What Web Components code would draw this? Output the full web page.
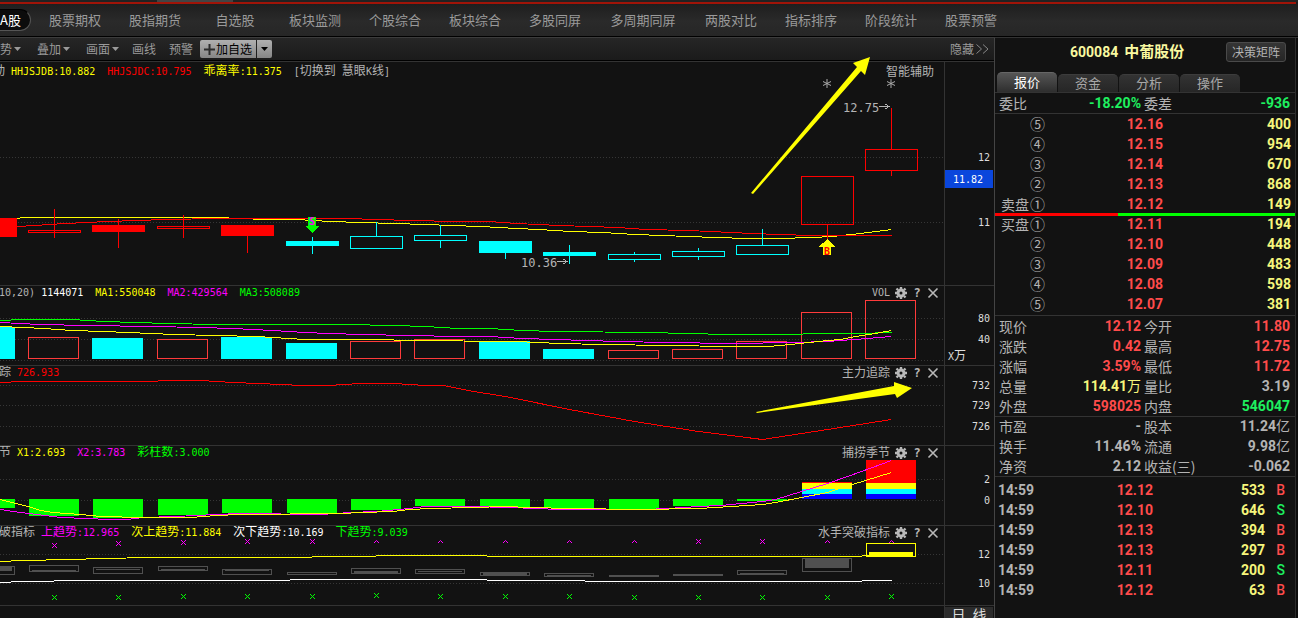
<!DOCTYPE html>
<html lang="zh-CN">
<head>
<meta charset="utf-8">
<title>600084 中葡股份</title>
<style>
html, body { margin: 0; height: 100%; background: #121212; overflow: hidden; }
body {
  --line: #333333;
  --grey: #b4b4b4;
  --red: #ff4b4b;
  --green: #1eef5f;
  --yellow: #f6f67c;
  --mono: "DejaVu Sans Mono", "Noto Sans CJK SC", monospace;
  --cjk: "Noto Sans CJK SC", sans-serif;
  --num: Roboto, "Noto Sans CJK SC", sans-serif;
  font: 12px/14px var(--cjk);
  color: var(--grey);
}
</style>
</head>
<body>
<market-app></market-app>

<script>
const reset = `
  *, *::before { box-sizing: border-box; }
  button, a { font: inherit; color: inherit; background: none; border: 0; padding: 0; margin: 0; text-decoration: none; white-space: nowrap; cursor: pointer; }
  svg { display: block; flex: none; }
  table { border-collapse: collapse; width: 100%; table-layout: fixed; }
  td, th { padding: 0; font-weight: 400; text-align: left; white-space: nowrap; }
`;

class Base extends HTMLElement {
  connectedCallback() {
    if (this.shadowRoot) return;
    const t = document.createElement('template');
    t.innerHTML = `<style>${reset}${this.css()}</style>${this.html()}`;
    this.attachShadow({ mode: 'open' }).append(t.content.cloneNode(true));
  }
  css() { return ''; }
  html() { return '<slot></slot>'; }
}

/* Main navigation */
customElements.define('top-nav', class extends Base {
  css() { return `
    :host { display: block; background: linear-gradient(#1c1c1c, #2a2a2a 60%, #262626); border-bottom: 1px solid #000; }
    .strip { height: 2px; background: #222; padding-left: 157px; }
    .strip i { display: block; width: 76px; height: 2px; background: #444; }
    .red { height: 2px; background: #a01408; margin-right: 2px; }
    nav { display: flex; align-items: center; height: 32px; gap: 4px; font-size: 13px; line-height: 20px; color: #9a9a9a; }
    .on { height: 22px; width: 31px; background: #0c0c0c; color: #fff; border: 1px solid #555; border-left: 0; border-top-color: #000; border-radius: 0 12px 12px 0; overflow: hidden; display: flex; justify-content: flex-end; padding-right: 9px; }
    ul { display: flex; list-style: none; margin: 0; padding: 0; }
    li { width: 80px; text-align: center; }
    li.wide { width: 96px; }
  `; }
  html() {
    const items = ['股票期权','股指期货','自选股','板块监测','个股综合','板块综合','多股同屏','多周期同屏','两股对比','指标排序','阶段统计','股票预警'];
    return `<div class="strip"><i></i></div><div class="red"></div>
      <nav><a class="on" href="#a">A股</a><ul>${items.map(t => `<li${t.length > 4 ? ' class="wide"' : ''}><a href="#">${t}</a></li>`).join('')}</ul></nav>`;
  }
});

/* Chart toolbar */
customElements.define('tool-bar', class extends Base {
  css() { return `
    :host { display: flex; align-items: center; height: 24px; gap: 7px; border-top: 1px solid #3c3c3c; border-bottom: 1px solid #000; background: linear-gradient(#262626, #1b1b1b); color: #9a9a9a; padding-right: 5px; line-height: 18px; }
    .tools { display: flex; gap: 13px; }
    .drop { display: flex; align-items: center; gap: 2px; margin-right: 3px; }
    .drop:nth-child(3) { margin-right: 0; }
    .split { display: flex; gap: 1px; color: #000; }
    .split button { height: 18px; background: linear-gradient(#b0b0b0, #858585); display: flex; align-items: center; }
    .add { padding: 0 4px; gap: 1px; border-radius: 2px 0 0 2px; }
    .more { padding: 0 4px; border-radius: 0 2px 2px 0; }
    .hide { margin-left: auto; display: flex; align-items: center; gap: 2px; }
  `; }
  html() {
    const caret = '<svg width="7" height="4"><path d="M0 0h7L3.5 4z" fill="currentColor"/></svg>';
    return `<div class="tools">
      ${['势','叠加','画面'].map(t => `<button class="drop">${t}${caret}</button>`).join('')}
      <button>画线</button><button>预警</button></div>
      <div class="split"><button class="add"><svg width="11" height="11"><path d="M5.500 0v11M0 5.500h11" stroke="#2c2c2c" stroke-width="2"/></svg>加自选</button><button class="more" aria-label="更多">${caret}</button></div>
      <button class="hide">隐藏<svg width="13" height="10" fill="none" stroke="#888"><path d="M.5 .5L5.500 5 .5 9.500M7 .5L12 5 7 9.500"/></svg></button>`;
  }
});

/* ---- drawing helpers: x and y are on one canvas shared by all panes ---- */
const box = (x, y, x2, y2, c, full) => full
  ? `<rect x="${x}" y="${y}" width="${x2 - x}" height="${y2 - y}" fill="${c}"/>`
  : `<rect x="${x + .5}" y="${y + .5}" width="${x2 - x - 1}" height="${y2 - y - 1}" fill="none" stroke="${c}"/>`;
const vline = (x, y, y2, c) => box(x, y, x + 1, y2, c, true);
const poly = (pts, c) => `<polyline fill="none" stroke="${c}" points="${pts.split(' ').map(p => p.split(',').map(n => +n + .5).join(',')).join(' ')}"/>`;
const dots = ys => ys.map(y => `<line x1="0" x2="100%" y1="${y + .5}" y2="${y + .5}" stroke="#363636" stroke-dasharray="1 2"/>`).join('');
const label = (x, y, t, o = '') => `<text x="${x}" y="${y}" ${o}>${t}</text>`;
const R = '#ff0000', C = '#00ffff', Y = '#ffff00', M = '#ff00ff', G = '#00ff00', V = '#ff3b3b';
const mids = [54,118,183,247,312,376,440,505,569,634,698,762,827,891];

const price = () => {
  const candles = [
    [-1,218,17,237,R,1],[28,230,81,233,R,0,54,209,238],[92,225,145,232,R,1,118,219,248],[157,226,210,229,R,0,183,215,238],
    [221,225,274,236,R,1,247,236,253],[286,241,339,246,C,1,312,237,254],[350,236,403,249,C,0,376,222,236],
    [414,235,467,241,C,0,440,225,235,241,248],[479,241,532,253,C,1,505,253,259],[543,252,596,256,C,1,569,245,264],
    [608,254,661,260,C,0,634,252,254,260,262],[672,251,725,257,C,0,698,248,251,257,260],[736,245,789,255,C,0,762,229,245],
    [801,176,854,225,R,0,827,225,239],[865,149,918,171,R,0,891,108,149,171,176]];
  return dots([157, 222])
    + poly('17,218 22,217 216,217 264,219 296,219 330,221 361,222 393,223 425,224 451,225 480,226 516,228 538,229 570,231 602,232 635,234 688,236 715,237 747,238 779,238 811,237 832,236 860,233 891,229', Y)
    + poly('17,226 35,225 48,224 65,223 86,222 108,221 135,220 167,219 216,218 345,218 409,220 457,221 489,221 516,223 559,225 618,227 645,229 688,230 731,232 752,233 779,234 811,235 891,235', R)
    + candles.map(c => (c[6] ? vline(c[6], c[7], c[8], c[4]) : '') + (c[9] ? vline(c[6], c[9], c[10], c[4]) : '') + box(c[0], c[1], c[2], c[3], c[4], c[5])).join('')
    + box(308, 217, 316, 226, G, true) + '<path d="M305 226h14l-7 7z" fill="#0f0"/>' + label(312, 225, 'S', 'font-size="10" text-anchor="middle" font-weight="700" fill="#f0f"')
    + '<path d="M827.500 239l8 7.500h-4.500V255h-8v-8.500h-4z" fill="#ff0"/>' + label(827, 255, 'B', 'font-size="10" text-anchor="middle" font-weight="700" fill="#f00"')
    + label(843, 112, '12.75', 'font-size="12"') + label(521, 267, '10.36', 'font-size="12"')
    + '<path d="M879 106.500h10M885.500 104l3.500 2.500-3.500 2.500M557 261.500h10M563.500 259l3.500 2.500-3.500 2.500" fill="none" stroke="#b4b4b4"/>'
    + [827, 891].map(x => `<path d="M${x} 79v9M${x - 4} 81.500l8 4M${x + 4} 81.500l-8 4" stroke="#aaa" shape-rendering="auto"/>`).join('');
};

const volume = () => {
  const bars = [[0,327,15,1],[28,337,79],[92,338,143,1],[157,339,208],[221,337,272,1],[286,343,337,1],[350,341,401],[414,339,465],[479,341,530,1],[543,349,594,1],[608,350,659],[672,349,723],[736,341,787],[801,312,852],[865,300,916]];
  return dots([318, 339, 360]) + bars.map(b => box(b[0], b[1], b[2], 359, b[3] ? C : V, b[3])).join('')
    + poly('0,320 22,319 71,319 103,321 135,322 167,323 216,324 345,324 393,325 425,326 457,328 489,328 522,330 554,331 651,332 683,333 731,334 795,334 811,333 859,333 891,332', G)
    + poly('0,322 39,324 87,325 151,326 200,327 232,328 272,330 304,332 329,333 361,334 409,335 457,336 489,336 522,338 586,340 618,341 667,342 731,343 795,342 827,341 867,338 891,336', M)
    + poly('0,326 23,327 44,328 71,330 103,331 151,333 173,334 216,335 256,336 304,339 377,339 409,340 515,341 559,343 602,344 667,345 730,346 768,346 790,344 827,340 840,339 855,336 875,333 891,330', Y);
};

const track = () => dots([385, 405, 426])
  + poly('0,382 22,381 151,381 165,380 200,380 232,382 258,383 280,384 302,385 328,385 360,383 393,383 425,385 443,385 473,391 505,396 569,409 634,421 698,431 762,439 827,429 891,419', R);

const season = () => dots([479, 500])
  + [[0,508,15],[29,516,79],[93,518,143],[158,515,208],[222,513,272],[287,513,337],[351,510,401],[415,506,465],[480,507,530],[544,508,594],[609,509,659],[673,506,723],[737,501,787]].map(b => box(b[0], 499, b[2], b[1], G, true)).join('')
  + [[802, 482], [866, 460]].map(([x, y]) => box(x, y, x + 50, 483, R, true) + box(x, 483, x + 50, 489, Y, true) + box(x, 489, x + 50, 494, C, true) + box(x, 494, x + 50, 499, '#00f', true)).join('')
  + poly('0,509 12,511 28,513 45,515 60,517 87,518 108,519 127,519 143,517 175,516 216,514 240,513 320,514 350,512 376,511 409,508 425,506 473,506 505,507 540,508 554,509 645,509 667,508 698,506 720,505 762,501 775,499 827,483 850,475 891,460', M)
  + poly('0,499 15,503 28,506 40,510 53,512 80,514 100,516 143,517 190,517 216,515 240,514 340,513 361,512 393,511 409,509 430,508 473,507 505,506 530,507 570,508 640,509 698,508 731,506 762,504 775,502 827,492 852,484 891,472', Y);

const breakout = () => {
  const D = '#505050';
  const cells = [[-1,566,15,575,0,566,12,571],[29,565,79,572,32,570,76,572],[93,567,143,574,96,569,140,570],[158,566,208,571,161,569,205,570],[222,569,272,575,225,570,269,571],[287,572,337,575],[351,568,401,574,354,571,398,574],[415,569,465,574,418,571,462,572],[480,572,530,576,483,572,527,576],[544,573,594,577,547,575,591,577],[609,575,659,577],[673,574,723,576],[737,570,787,575,740,573,784,574],[802,558,852,572,805,558,849,568]];
  const ys = [545,543,542,541,541,541,541,541,541,541,541,541,541,541];
  const hat = [5,6,7,8,9,12,13];
  const gy = [597,597,596,596,596,595,596,596,596,597,597,597,597,596];
  const x = (cx, cy, c) => `<path d="M${cx - 2} ${cy - 2}l5 5M${cx + 3} ${cy - 2}l-5 5" stroke="${c}" shape-rendering="auto"/>`;
  return dots([554, 583])
    + poly('0,561 22,560 70,559 102,558 151,557 280,557 408,555 473,555 500,556 858,556 866,555 875,555', Y)
    + poly('0,582 22,581 86,580 280,580 300,579 473,579 500,580 667,581 858,581 866,580 891,580', '#fff')
    + cells.map(c => box(c[0], c[1], c[2], c[3], D) + (c[6] ? box(c[4], c[5], c[6], c[7], D, true) : '')).join('')
    + box(866, 543, 916, 557, Y) + box(869, 552, 913, 556, Y, true)
    + mids.map((m, i) => (hat.includes(i) ? `<path d="M${m - 2} 543l2.500-2.500 2.500 2.500" fill="none" stroke="${M}" shape-rendering="auto"/>` : x(m, ys[i], M)) + x(m, gy[i], G)).join('');
};

/* One chart with its legend, its buttons and its scale. */
const plots = { price, volume, track, season, breakout };
customElements.define('chart-pane', class extends Base {
  css() { return `
    :host { display: grid; grid-template-columns: minmax(0, 1fr) 50px; border-bottom: 1px solid var(--line); font: 10px/14px var(--mono); }
    .plot { display: grid; grid-template-columns: minmax(0, 1fr); overflow: hidden; }
    .plot > * { grid-area: 1 / 1; }
    header { display: flex; align-items: center; justify-content: space-between; align-self: start; height: ${this.getAttribute('kind') === 'price' ? 20 : 14}px; padding-right: 5px; white-space: pre; }
    .legend { display: flex; gap: 12px; margin-left: -1px; }
    .side { display: flex; align-items: center; gap: 4px; }
    .side button { width: 12px; height: 12px; font: 700 12px/12px var(--mono); display: grid; place-items: center; color: #b8b8b8; }
    svg { width: 100%; shape-rendering: crispEdges; fill: var(--grey); }
    .side svg { width: 12px; }
    .axis { border-left: 1px solid var(--line); }
    .axis text { fill: #ddd; }
  `; }
  html() {
    const top = +this.getAttribute('top'), h = +this.getAttribute('rows');
    const kind = this.getAttribute('kind');
    const marks = JSON.parse(this.getAttribute('scale')).map(([t, y]) => label(45, y + 4, t, 'text-anchor="end"')).join('');
    const extra = kind === 'price' ? '<rect y="170" width="48" height="18" fill="#0a46dc"/>' + label(8, 183, '11.82', 'style="fill:#fff"')
      : kind === 'volume' ? '<text x="3" y="360">X<tspan font-size="12">万</tspan></text>' : '';
    const tools = kind === 'price' ? '' : `
      <button aria-label="设置"><svg width="12" height="12" viewBox="0 0 12 12"><g fill="none" stroke="#b8b8b8" shape-rendering="auto"><circle cx="6" cy="6" r="3" stroke-width="3"/><path stroke-width="2.400" d="M6 0v2M6 10v2M0 6h2M10 6h2M1.500 1.500l1.500 1.500M9 9l1.500 1.500M10.500 1.500L9 3M3 9l-1.500 1.500"/></g></svg></button>
      <button>?</button>
      <button aria-label="关闭"><svg width="12" height="12"><path d="M1.500 1.500l9 9M10.500 1.500l-9 9" stroke="#b8b8b8" stroke-width="1.600" shape-rendering="auto"/></svg></button>`;
    return `<div class="plot"><svg height="${h}"><g transform="translate(0 ${-top})">${plots[kind]()}</g></svg>
      <header><div class="legend"><slot></slot></div><div class="side"><slot name="title"></slot>${tools}</div></header></div>
      <div class="axis"><svg height="${h}"><g transform="translate(0 ${-top})">${extra}${marks}</g></svg></div>`;
  }
});

/* Legend entry: Chinese text is set larger than the figures beside it. */
customElements.define('legend-item', class extends Base {
  css() { return `:host { display: block; white-space: pre; color: ${this.getAttribute('ink') || 'inherit'}; } ::slotted(b) { font-weight: 400; }`; }
});

customElements.define('quote-head', class extends Base {
  css() { return `
    :host { display: grid; grid-template-columns: 1fr 60px; align-items: center; height: 34px; padding: 0 9px 4px 75px; margin-top: -1px; }
    h1 { margin: 0; font: 700 14px/20px var(--num); color: #f9f9a0; display: flex; gap: 6px; white-space: nowrap; }
    span { font-size: 15px; }
    button { height: 20px; line-height: 18px; background: linear-gradient(#353535, #252525); border: 1px solid #4a4a4a; border-radius: 3px; }
  `; }
  html() { return '<h1>600084 <span>中葡股份</span></h1><button>决策矩阵</button>'; }
});

customElements.define('quote-tabs', class extends Base {
  css() { return `
    :host { display: flex; align-items: flex-end; gap: 1px; height: 22px; padding-left: 2px; border-bottom: 1px solid var(--line); font-size: 13px; line-height: 16px; color: #a8a8a8; }
    button { width: 60px; height: 18px; padding-bottom: 2px; background: linear-gradient(#333, #262626); border-radius: 5px 5px 0 0; border-top: 1px solid #3c3c3c; }
    [aria-selected=true] { height: 20px; color: #fff; background: linear-gradient(#555, #2e2e2e); border-color: #666; }
  `; }
  html() { return ['报价','资金','分析','操作'].map((t, i) => `<button role="tab" aria-selected="${!i}">${t}</button>`).join(''); }
});

const cellCss = `
  :host { display: block; font-size: 14px; line-height: 16px; }
  tr { height: 20px; }
  th, td { vertical-align: middle; }
  td { font: 700 14px/16px var(--num); text-align: right; }
  td i { font: 400 14px/14px var(--cjk); }
  .r { color: var(--red); } .g { color: var(--green); } .y { color: var(--yellow); }
`;

/* Label and value pairs, two to a row: label:value:colour | label:value:colour */
customElements.define('quote-grid', class extends Base {
  css() { return cellCss + `
    :host { border-bottom: 1px solid var(--line); margin-bottom: -1px; }
    th:first-child { padding-left: 4px; }
    th:nth-child(3) { padding-left: 3px; }
    td:last-child { padding-right: 5px; }
  `; }
  html() {
    return `<table><colgroup><col width="40"><col width="106"><col width="64"><col></colgroup>${this.getAttribute('rows').split(';').map(r => `<tr>${r.split('|').map(c => {
      const [n, v, k] = c.split(':');
      return `<th scope="row">${n}</th><td class="${k}">${v.replace(/[万亿]/, '<i>$&</i>')}</td>`;
    }).join('')}</tr>`).join('')}</table>`;
  }
});

customElements.define('order-book', class extends Base {
  css() { return cellCss + `
    :host { border-bottom: 1px solid var(--line); padding: 1px 0; }
    th { text-align: right; }
    th b { font-weight: 400; font-size: 15px; line-height: 16px; margin-left: 1px; }
    td:last-child { padding-right: 4px; }
    .bar { display: flex; height: 3px; margin: -1px 0 -2px; position: relative; background: linear-gradient(90deg, #f00 0 41%, #0f0 41%); }
  `; }
  html() {
    const side = (name, rows) => `<table><colgroup><col width="50"><col width="118"><col></colgroup>${rows.map(([n, p, q]) => `<tr><th scope="row">${n === '①' ? name : ''}<b>${n}</b></th><td class="r">${p}</td><td class="y">${q}</td></tr>`).join('')}</table>`;
    return side('卖盘', [['⑤','12.16',400],['④','12.15',954],['③','12.14',670],['②','12.13',868],['①','12.12',149]])
      + '<div class="bar"></div>'
      + side('买盘', [['①','12.11',194],['②','12.10',448],['③','12.09',483],['④','12.08',598],['⑤','12.07',381]]);
  }
});

customElements.define('trade-list', class extends Base {
  css() { return cellCss + `
    :host { padding-top: 4px; }
    td:first-child { text-align: left; padding-left: 3px; }
    td:last-child { padding-right: 10px; font-weight: 500; }
  `; }
  html() {
    return `<table><colgroup><col width="60"><col width="98"><col width="112"><col></colgroup>${[['12.12',533,'B'],['12.10',646,'S'],['12.13',394,'B'],['12.13',297,'B'],['12.11',200,'S'],['12.12',63,'B']].map(([p, q, s]) => `<tr><td>14:59</td><td class="r">${p}</td><td class="y">${q}</td><td class="${s === 'B' ? 'r' : 'g'}">${s}</td></tr>`).join('')}</table>`;
  }
});

/* Yellow pointers drawn over the charts */
customElements.define('pointer-layer', class extends Base {
  css() { return ':host { position: absolute; inset: 0; pointer-events: none; } svg { width: 100%; height: 100%; }'; }
  html() { return `<svg fill="#ff0"><path d="M751 193l2 1L861 71l4 4 5-18-17 6 4 4zM756 412l1 1L895 394l2 4 15-10-18-6v4z"/></svg>`; }
});

customElements.define('market-app', class extends Base {
  css() { return `
    :host { display: flex; flex-direction: column; min-height: 100vh; position: relative; }
    main { flex: 1; display: grid; grid-template-columns: minmax(0, 1fr) 304px; }
    .top { border-top: 1px solid var(--line); }
    aside { border-left: 1px solid #444; border-top: 1px solid var(--line); padding-right: 3px; background: linear-gradient(90deg, #121212 300px, #2c2c2c 300px 301px, #0c0c0c 301px); }
    footer { display: grid; grid-template-columns: minmax(0, 1fr) 50px; }
    .period { grid-column: 2; border-left: 1px solid var(--line); padding: 1px 1px 0 0; }
    .period button { display: block; width: 100%; background: #2b2b2b; color: #ddd; font-size: 14px; line-height: 14px; }
    b { font-size: 12px; line-height: 12px; }
    .cut { margin-left: -6px; margin-right: -6px; }
    .lead { margin-right: -6px; }
    [slot=title] { font-size: 12px; margin-right: 1px; }
    [slot=title].vol { font-size: 10px; }
    [slot=title].help { margin-right: 5px; }
  `; }
  html() {
    const li = (ink, t, c = '') => `<legend-item ink="${ink}" class="${c}">${t.replace(/[\u4e00-\u9fff]+/g, '<b>$&</b>')}</legend-item>`;
    return `<top-nav></top-nav>
    <main>
      <div class="charts">
        <tool-bar></tool-bar>
        <chart-pane class="top" kind="price" top="62" rows="223" scale='[["12",157],["11",222]]'>
          ${li('', '动', 'cut')}${li(Y, 'HHJSJDB:10.882')}${li(R, 'HHJSJDC:10.795')}${li(Y, '乖离率:11.375')}${li('', '[切换到 慧眼K线]')}
          <span slot="title" class="help">智能辅助</span>
        </chart-pane>
        <chart-pane kind="volume" top="286" rows="79" scale='[["80",318],["40",339]]'>
          ${li('', '10,20)', 'lead')}${li('#fff', '1144071')}${li(Y, 'MA1:550048')}${li(M, 'MA2:429564')}${li(G, 'MA3:508089')}
          <span slot="title" class="vol">VOL</span>
        </chart-pane>
        <chart-pane kind="track" top="366" rows="79" scale='[["732",385],["729",405],["726",426]]'>
          ${li('', '踪', 'lead')}${li(R, '726.933')}<span slot="title">主力追踪</span>
        </chart-pane>
        <chart-pane kind="season" top="446" rows="79" scale='[["2",479],["0",500]]'>
          ${li('', '节', 'lead')}${li(Y, 'X1:2.693')}${li(M, 'X2:3.783')}${li(G, '彩柱数:3.000')}<span slot="title">捕捞季节</span>
        </chart-pane>
        <chart-pane kind="breakout" top="526" rows="79" scale='[["12",554],["10",583]]'>
          ${li('', '破指标', 'lead')}${li(M, '上趋势:12.965')}${li(Y, '次上趋势:11.884')}${li('#fff', '次下趋势:10.169')}${li(G, '下趋势:9.039')}<span slot="title">水手突破指标</span>
        </chart-pane>
        <footer><div class="period"><button>日&ensp;线</button></div></footer>
      </div>
      <aside>
        <quote-head></quote-head>
        <quote-tabs></quote-tabs>
        <quote-grid rows="委比:-18.20%:g|委差:-936:g"></quote-grid>
        <order-book></order-book>
        <quote-grid rows="现价:12.12:r|今开:11.80:r;涨跌:0.42:r|最高:12.75:r;涨幅:3.59%:r|最低:11.72:r;总量:114.41万:y|量比:3.19:;外盘:598025:r|内盘:546047:g"></quote-grid>
        <quote-grid rows="市盈:-:|股本:11.24亿:;换手:11.46%:|流通:9.98亿:;净资:2.12:|收益(三):-0.062:"></quote-grid>
        <trade-list></trade-list>
      </aside>
    </main>
    <pointer-layer></pointer-layer>`;
  }
});
</script>
</body>
</html>
